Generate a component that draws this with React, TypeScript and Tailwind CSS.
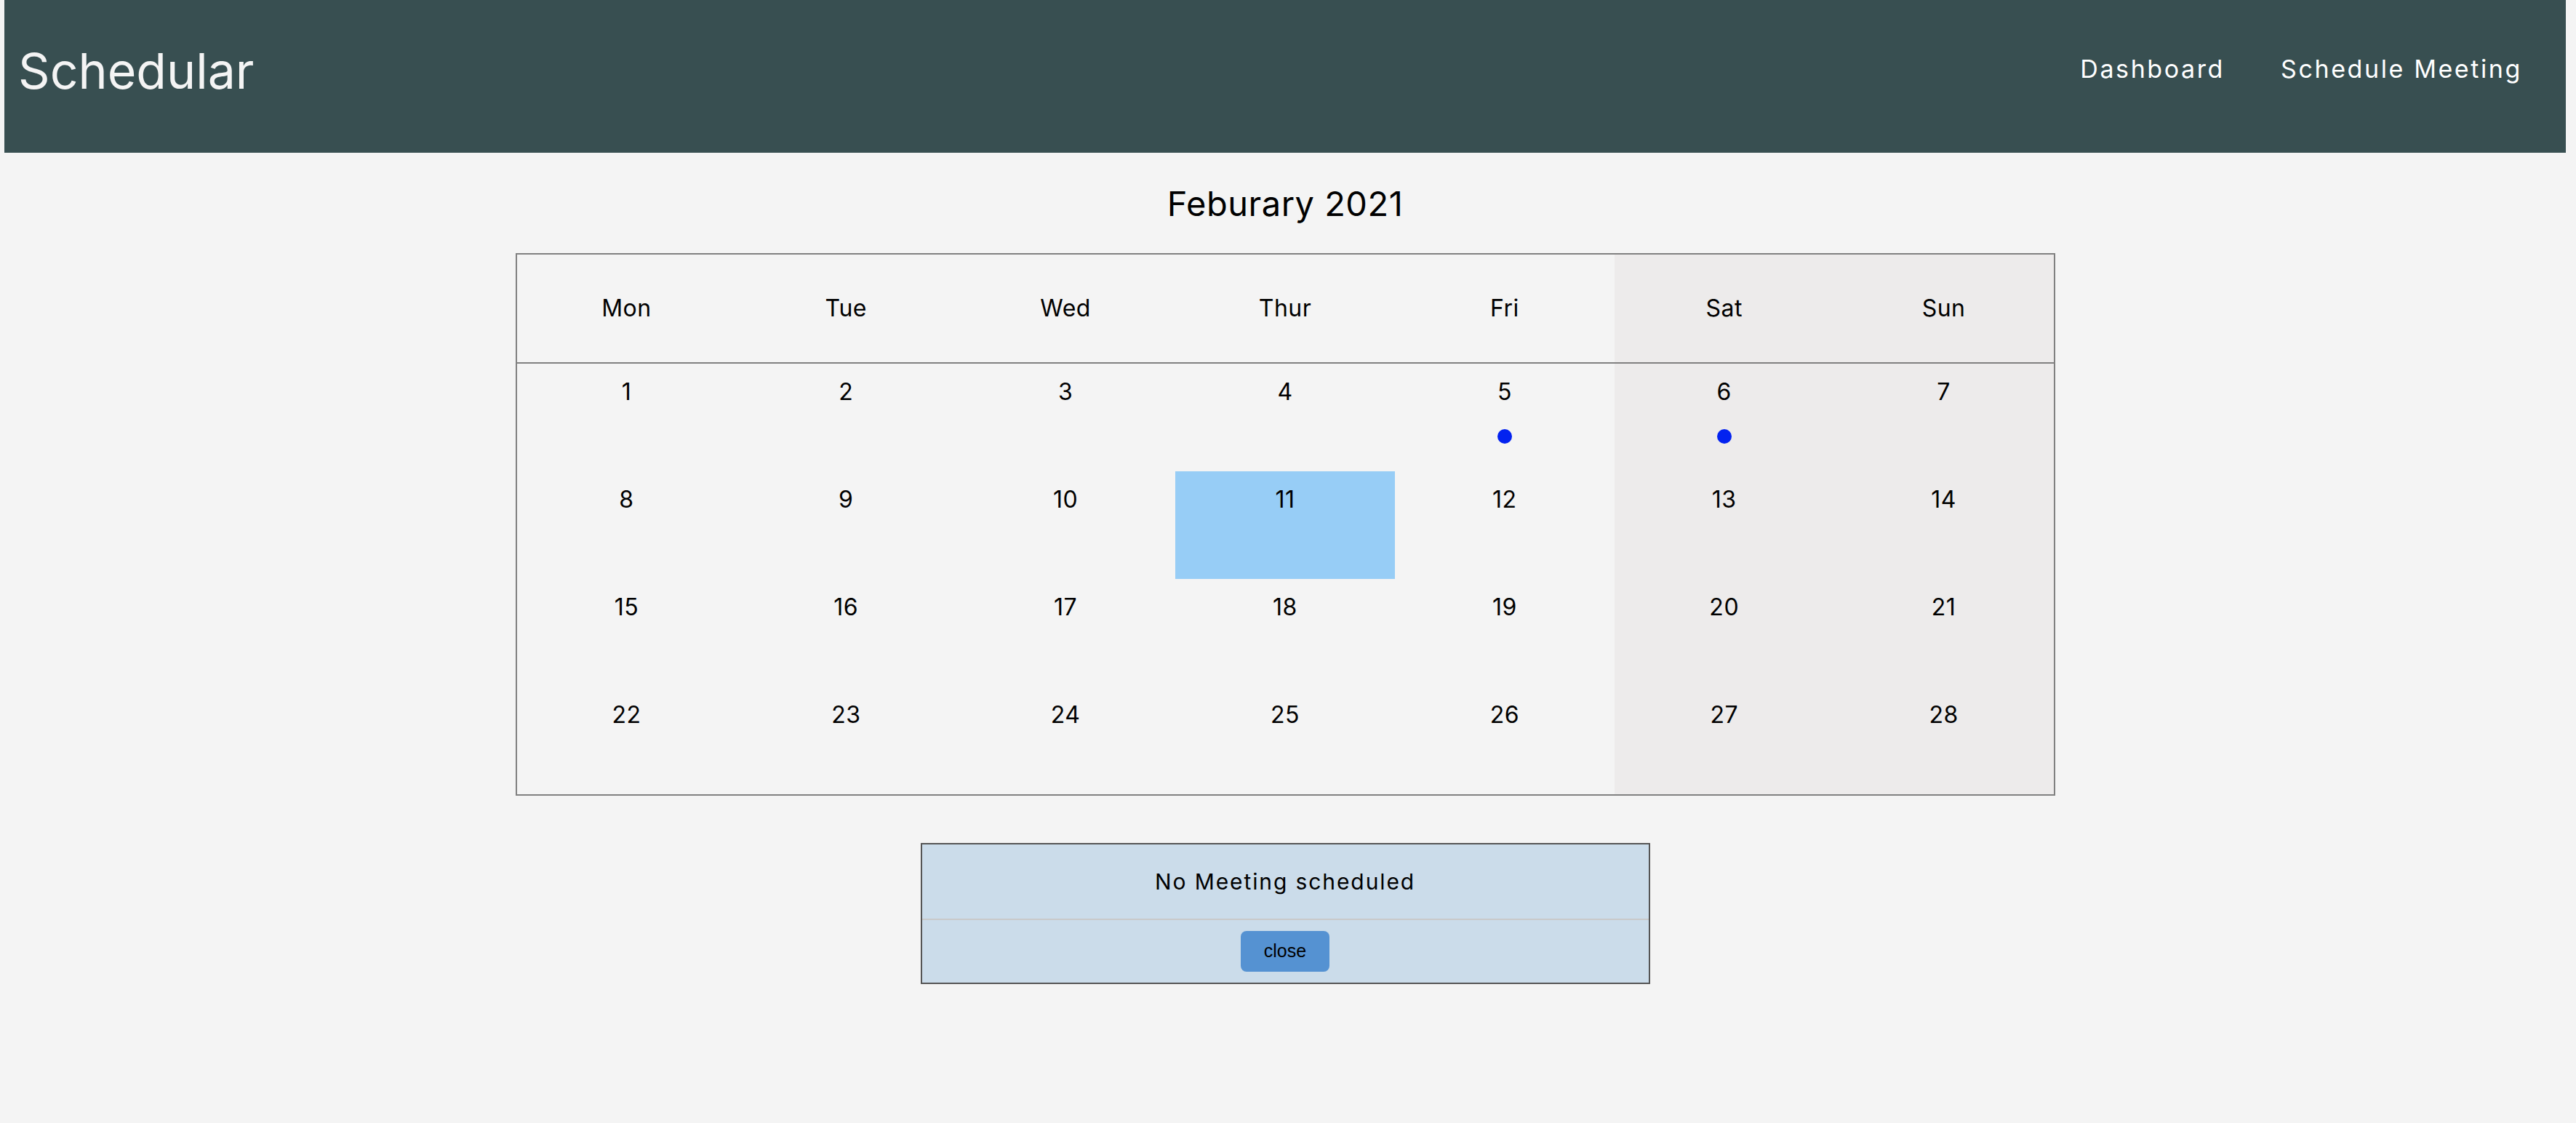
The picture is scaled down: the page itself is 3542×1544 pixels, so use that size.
import React from 'react';

const DAYS = ['Mon', 'Tue', 'Wed', 'Thur', 'Fri', 'Sat', 'Sun'];

// Feb 2021 starts on a Monday, four full weeks
const WEEKS = [0, 1, 2, 3].map((w) => [1, 2, 3, 4, 5, 6, 7].map((d) => w * 7 + d));

const MEETING_DAYS = [5, 6];
const SELECTED = 11;

function DayCell({ day, col }: { day: number; col: number }) {
  const weekend = col >= 5;
  const selected = day === SELECTED;
  return (
    <div
      className={
        'h-[148px] flex flex-col items-center pt-[23px] ' +
        (selected ? 'bg-[#97cdf6]' : weekend ? 'bg-[#edebeb]' : '')
      }
    >
      <span className="text-[32px] leading-none tracking-[0.5px]">{day}</span>
      {MEETING_DAYS.includes(day) && <span className="mt-[35px] w-[20px] h-[20px] rounded-full bg-[#0322f0]" />}
    </div>
  );
}

export default function App() {
  return (
    <div className="min-h-screen bg-[#f4f4f4] text-black font-['Inter','Noto_Sans',sans-serif]">
      <div className="w-[3534px]">
        {/* Header */}
        <header className="ml-[6px] w-[3522px] h-[210px] bg-[#384f51] flex items-center justify-between pl-[19px] pr-[60px] pb-[16px]">
          <h1 className="text-[68px] leading-none text-[#f4f4f4]">Schedular</h1>
          <nav className="flex items-center gap-[77px] text-[34px] leading-none tracking-[2.6px] text-white mb-[4px]">
            <a>Dashboard</a>
            <a>Schedule Meeting</a>
          </nav>
        </header>

        <main className="flex flex-col items-center">
          <div className="h-[138px] flex items-center justify-center">
            <h2 className="text-[47px] leading-none tracking-[0.5px]">Feburary 2021</h2>
          </div>

          {/* Calendar */}
          <div className="w-[2117px] border-2 border-[#808080]">
            <div className="grid grid-cols-7 border-b-2 border-[#808080]">
              {DAYS.map((d, i) => (
                <div
                  key={d}
                  className={
                    'h-[148px] flex items-center justify-center text-[32px] leading-none tracking-[0.5px] ' +
                    (i >= 5 ? 'bg-[#edebeb]' : '')
                  }
                >
                  {d}
                </div>
              ))}
            </div>
            {WEEKS.map((week, w) => (
              <div key={w} className="grid grid-cols-7">
                {week.map((day, i) => (
                  <DayCell key={day} day={day} col={i} />
                ))}
              </div>
            ))}
          </div>

          {/* Meeting popup */}
          <div className="mt-[65px] w-[1003px] border-2 border-[#555555] bg-[#cbdcea]">
            <div className="h-[104px] flex items-center justify-center text-[30px] leading-none tracking-[1.9px] border-b-2 border-[#c9c9c9]">
              No Meeting scheduled
            </div>
            <div className="h-[86px] flex items-center justify-center">
              <button className="w-[122px] h-[56px] rounded-[8px] bg-[#5592d2] text-[25px] text-black font-['Liberation_Sans',Arial,sans-serif]">
                close
              </button>
            </div>
          </div>
        </main>
      </div>
    </div>
  );
}
